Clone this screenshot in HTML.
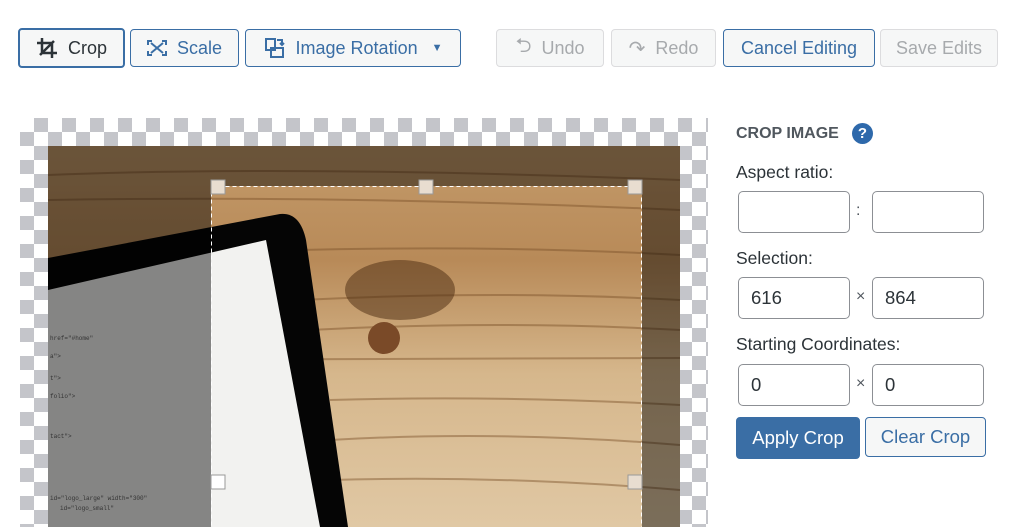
<!DOCTYPE html>
<html><head><meta charset="utf-8"><style>
*{box-sizing:border-box;margin:0;padding:0}
body{width:1024px;height:527px;overflow:hidden;background:#fff;font-family:"Liberation Sans",sans-serif;position:relative}
.b{position:absolute;height:38px;border:1px solid #3a6ea5;border-radius:4px;background:#f6f7f7;color:#3a6ea5;font-size:18px;display:flex;align-items:center;justify-content:center;gap:10px}
.d{border-color:#dcdcde;color:#a7aaad}
.lbl{position:absolute;left:736px;font-size:17.5px;color:#2c3338}
.in{position:absolute;width:112px;height:42px;border:1px solid #8c8f94;border-radius:5px;background:#fff;font-size:18.5px;color:#2c3338;padding-left:12px;line-height:40px}
.sep{position:absolute;left:856px;font-size:16px;color:#50575e}
.chk{position:absolute;left:20px;top:118px;width:688px;height:409px;
background:conic-gradient(#c4c5ca 25%,#fff 0 50%,#c4c5ca 0 75%,#fff 0);background-size:28px 28px;background-position:0 0}
</style></head><body>
<div class="b" style="left:18px;top:28px;width:107px;height:40px;border-width:2px;color:#2c3338"><svg width="22" height="22" viewBox="0 0 22 22" fill="none" stroke="#2c3338" stroke-width="3"><path d="M6 1v15h15M1 6h15v15M4 18L18 4" stroke-width="2.5"/></svg>Crop</div>
<div class="b" style="left:130px;top:29px;width:109px"><svg width="20" height="16" viewBox="0 0 20 16" fill="#3a6ea5"><path d="M0 0h5v2H2v3H0zM20 0h-5v2h3v3h2zM0 16h5v-2H2v-3H0zM20 16h-5v-2h3v-3h2z"/><path d="M4 3l12 10M16 3L4 13" stroke="#3a6ea5" stroke-width="2"/></svg>Scale</div>
<div class="b" style="left:245px;top:29px;width:216px"><svg width="22" height="22" viewBox="0 0 22 22" fill="none" stroke="#3a6ea5" stroke-width="2"><rect x="2" y="2" width="9" height="11"/><rect x="7" y="11" width="12" height="9"/><path d="M13 3h5v5M16 6l2 2 2-2"/></svg>Image Rotation <span style="font-size:11px;margin-left:4px">▼</span></div>
<div class="b d" style="left:496px;top:29px;width:108px"><span style="font-size:20px">⮌</span>Undo</div>
<div class="b d" style="left:611px;top:29px;width:105px"><span style="font-size:20px">↷</span>Redo</div>
<div class="b" style="left:723px;top:29px;width:152px">Cancel Editing</div>
<div class="b d" style="left:880px;top:29px;width:118px">Save Edits</div>

<div class="chk"></div>
<svg style="position:absolute;left:48px;top:146px" width="632" height="381" viewBox="48 146 632 381">
<defs><linearGradient id="w" x1="0" y1="0" x2="0" y2="1"><stop offset="0" stop-color="#c39a6a"/><stop offset=".3" stop-color="#b88a58"/><stop offset=".6" stop-color="#d6b78c"/><stop offset="1" stop-color="#e0c8a4"/></linearGradient></defs>
<rect x="48" y="146" width="632" height="381" fill="url(#w)"/>
<g stroke="#7a5028" stroke-opacity=".45" stroke-width="2" fill="none">
<path d="M48 175 Q300 165 680 180M48 200Q350 195 680 210M300 250Q500 245 680 255M300 300Q500 290 680 300M310 330Q500 320 680 330M48 360L680 358M330 400Q500 395 680 405M330 440Q500 430 680 445M330 480Q500 475 680 490"/></g>
<ellipse cx="400" cy="290" rx="55" ry="30" fill="#4a2a10" opacity=".5"/>
<circle cx="384" cy="338" r="16" fill="#7a4a28"/>
<path d="M48 258 L280 214 Q300 212 306 240 L348 527 L48 527Z" fill="#050505"/>
<path d="M48 290 L266 240 L320 527 L48 527Z" fill="#f2f2f0"/>
<path d="M48 146h632v381H48zM211 186v341h431V186z" fill="#000" fill-opacity=".45" fill-rule="evenodd"/>
<g font-family="Liberation Mono,monospace" font-size="6" fill="#333"><text x="50" y="340">href="#home"</text><text x="50" y="358">a"&gt;</text><text x="50" y="380">t"&gt;</text><text x="50" y="398">folio"&gt;</text><text x="50" y="438">tact"&gt;</text><text x="50" y="500">id="logo_large" width="300"</text><text x="60" y="510">id="logo_small"</text></g>
<rect x="211.5" y="186.5" width="430" height="345" fill="none" stroke="#fff" stroke-dasharray="4 3"/>
<g fill="#e8ddd0" stroke="#999"><rect x="211" y="180" width="14" height="14"/><rect x="419" y="180" width="14" height="14"/><rect x="628" y="180" width="14" height="14"/><rect x="211" y="475" width="14" height="14" fill="#fff"/><rect x="628" y="475" width="14" height="14"/></g>
</svg>

<div style="position:absolute;left:736px;top:125px;font-size:16px;font-weight:bold;color:#50575e">CROP IMAGE</div>
<div style="position:absolute;left:852px;top:123px;width:21px;height:21px;border-radius:50%;background:#2e69ab;color:#fff;font-weight:bold;font-size:15px;text-align:center;line-height:21px">?</div>
<div class="lbl" style="top:162px">Aspect ratio:</div>
<div class="in" style="left:738px;top:191px"></div><div class="sep" style="top:202px">:</div><div class="in" style="left:872px;top:191px"></div>
<div class="lbl" style="top:248px">Selection:</div>
<div class="in" style="left:738px;top:277px">616</div><div class="sep" style="top:288px">×</div><div class="in" style="left:872px;top:277px">864</div>
<div class="lbl" style="top:334px">Starting Coordinates:</div>
<div class="in" style="left:738px;top:364px">0</div><div class="sep" style="top:375px">×</div><div class="in" style="left:872px;top:364px">0</div>
<div class="b" style="left:736px;top:417px;width:124px;height:42px;background:#3a6ea5;color:#fff;font-size:18.5px">Apply Crop</div>
<div class="b" style="left:865px;top:417px;width:121px;height:40px;font-size:18.5px">Clear Crop</div>
</body></html>
